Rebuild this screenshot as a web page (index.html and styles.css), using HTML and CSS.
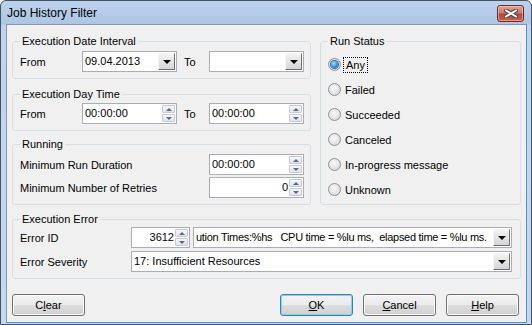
FILE: index.html
```html
<!DOCTYPE html>
<html lang="en">
<head>
    <meta charset="UTF-8">
    <title>Job History Filter</title>
    <link rel="stylesheet" href="styles.css">
</head>
<body>
    <div class="window">
        <div class="titlebar">
            <span class="title">Job History Filter</span>
            <span class="close">
                <svg width="14" height="9" viewBox="0 0 14 9">
                    <path d="M2 1.5 L12 7.5 M12 1.5 L2 7.5" stroke="#4a4a4a" stroke-width="4" stroke-linecap="square"/>
                    <path d="M2 1.5 L12 7.5 M12 1.5 L2 7.5" stroke="#fff" stroke-width="2" stroke-linecap="square"/>
                </svg>
            </span>
        </div>

        <div class="client">
            <div class="top">
                <div class="left">
                    <fieldset class="group g-date">
                        <legend>Execution Date Interval</legend>
                        <div class="row">
                            <span class="lbl">From</span>
                            <div class="combo w95"><span class="value">09.04.2013</span><span class="drop"></span></div>
                            <span class="lbl-to">To</span>
                            <div class="combo w95"><span class="value"></span><span class="drop"></span></div>
                        </div>
                    </fieldset>

                    <fieldset class="group g-time">
                        <legend>Execution Day Time</legend>
                        <div class="row">
                            <span class="lbl">From</span>
                            <div class="spin w95"><span class="value">00:00:00</span><span class="arrows"><i class="up"></i><i class="down"></i></span></div>
                            <span class="lbl-to">To</span>
                            <div class="spin w95"><span class="value">00:00:00</span><span class="arrows"><i class="up"></i><i class="down"></i></span></div>
                        </div>
                    </fieldset>

                    <fieldset class="group g-running">
                        <legend>Running</legend>
                        <div class="row">
                            <span class="lbl-wide">Minimum Run Duration</span>
                            <div class="spin w95"><span class="value">00:00:00</span><span class="arrows"><i class="up"></i><i class="down"></i></span></div>
                        </div>
                        <div class="row">
                            <span class="lbl-wide">Minimum Number of Retries</span>
                            <div class="spin w95"><span class="value num">0</span><span class="arrows"><i class="up"></i><i class="down"></i></span></div>
                        </div>
                    </fieldset>
                </div>

                <fieldset class="group g-status">
                    <legend>Run Status</legend>
                    <div class="radio"><span class="circle on"><span class="dot"></span></span><span class="focus">Any</span></div>
                    <div class="radio"><span class="circle"></span><span>Failed</span></div>
                    <div class="radio"><span class="circle"></span><span>Succeeded</span></div>
                    <div class="radio"><span class="circle"></span><span>Canceled</span></div>
                    <div class="radio"><span class="circle"></span><span>In-progress message</span></div>
                    <div class="radio"><span class="circle"></span><span>Unknown</span></div>
                </fieldset>
            </div>

            <fieldset class="group g-error">
                <legend>Execution Error</legend>
                <div class="row">
                    <span class="lbl-err">Error ID</span>
                    <div class="spin w59"><span class="value num">3612</span><span class="arrows"><i class="up"></i><i class="down"></i></span></div>
                    <div class="combo grow msg"><span class="value">ution Times:%hs   CPU time = %lu ms,  elapsed time = %lu ms.</span><span class="drop"></span></div>
                </div>
                <div class="row">
                    <span class="lbl-err">Error Severity</span>
                    <div class="combo grow"><span class="value">17: Insufficient Resources</span><span class="drop"></span></div>
                </div>
            </fieldset>

            <div class="buttons">
                <button class="btn">C<u>l</u>ear</button>
                <span class="spacer"></span>
                <button class="btn default"><u>O</u>K</button>
                <button class="btn"><u>C</u>ancel</button>
                <button class="btn"><u>H</u>elp</button>
            </div>
        </div>
    </div>
</body>
</html>
```

FILE: styles.css
```css
* { box-sizing: border-box; }
body { margin: 0; font-family: "Liberation Sans", Arial, sans-serif; font-size: 11px; color: #000; background: #fff; }

.window { width: 532px; height: 325px; display: flex; flex-direction: column; border: 1px solid #43536a; border-radius: 6px 6px 0 0; background: linear-gradient(#bdd2eb, #adc5e4 23px, #c0d4ec 24px, #c5d8ee); }
.titlebar { height: 23px; flex: none; display: flex; align-items: center; justify-content: space-between; padding: 0 7px 0 6px; }
.title { font-size: 12px; }
.close { width: 27px; height: 17px; margin-top: 2px; display: flex; align-items: center; justify-content: center; border: 1px solid #6b2b25; border-radius: 3px; background: linear-gradient(#e3a293, #d0786a 45%, #bb4434 55%, #c8614c); box-shadow: inset 0 0 0 1px rgba(255, 220, 210, 0.5); }

.client { flex: 1; margin: 0 4px 1px 5px; background: #f0f0f0; border: 1px solid; border-color: #8396b0 #3a9be0 #3a9be0 #8396b0; padding: 9px 5px 0 5px; display: flex; flex-direction: column; }

.top { display: flex; gap: 9px; align-items: stretch; }
.left { width: 299px; display: flex; flex-direction: column; }

.group { margin: 0; padding: 3px 6px 6px 7px; border: 1px solid #d5dfe5; border-radius: 3px; min-width: 0; }
.group legend { padding: 0 2px; line-height: 14px; font-size: 11px; }
.g-time { margin-top: 8px; padding-top: 2px; }
.g-running { margin-top: 6px; }
.g-running .row + .row { margin-top: 2px; }
.g-status { width: 201px; padding-top: 4px; padding-bottom: 2px; }
.g-error { margin-top: 7px; padding: 1px 8px 6px 7px; }
.g-error .row + .row { margin-top: 3px; }

.row { display: flex; align-items: center; }
.lbl { width: 62px; flex: none; }
.lbl-to { width: 25px; margin-left: 7px; flex: none; }
.lbl-wide { flex: 1; }
.lbl-err { width: 111px; flex: none; }

.combo, .spin { height: 21px; display: flex; align-items: stretch; padding: 1px; background: #fff; border: 1px solid #abadb3; }
.w95 { width: 95px; flex: none; }
.w59 { width: 59px; flex: none; }
.grow { flex: 1; min-width: 0; }
.msg { margin-left: 3px; }
.msg .value { letter-spacing: -0.3px; }
.value { flex: 1; min-width: 0; padding-left: 1px; line-height: 17px; white-space: pre; overflow: hidden; }
.value.num { text-align: right; padding-right: 1px; }

.drop { width: 17px; flex: none; display: flex; align-items: center; justify-content: center; border: 1px solid; border-color: #f6f6f6 #6e6e6e #6e6e6e #f6f6f6; background: linear-gradient(#f4f4f4, #d5d5d5); }
.drop::after { content: ""; border-left: 4px solid transparent; border-right: 4px solid transparent; border-top: 4px solid #000; }

.arrows { width: 13px; flex: none; display: flex; flex-direction: column; gap: 1px; }
.arrows i { flex: 1; display: flex; align-items: center; justify-content: center; border: 1px solid #c3cad5; border-radius: 1px; background: linear-gradient(#f7f7f7, #e2e4e8); }
.arrows .up::after { content: ""; border-left: 3px solid transparent; border-right: 3px solid transparent; border-bottom: 3px solid #4d6a9a; }
.arrows .down::after { content: ""; border-left: 3px solid transparent; border-right: 3px solid transparent; border-top: 3px solid #4d6a9a; }

.radio { height: 25px; display: flex; align-items: center; gap: 4px; }
.circle { width: 13px; height: 13px; flex: none; border-radius: 50%; border: 1px solid #8d9195; background: radial-gradient(circle at 45% 40%, #fafafa, #e2e2e2 60%, #cfcfcf); display: flex; align-items: center; justify-content: center; }
.dot { width: 7px; height: 7px; border-radius: 50%; background: radial-gradient(circle at 40% 35%, #a4e1ff, #3c8fd4 55%, #1a5a9c); box-shadow: 0 0 0 1px #2a6aa8; }
.focus { outline: 1px dotted #000; outline-offset: 1px; padding: 0 1px; }

.buttons { display: flex; gap: 10px; margin-top: 15px; padding-right: 2px; }
.spacer { flex: 1; }
.btn { width: 73px; height: 22px; padding: 0; font: inherit; color: #000; border: 1px solid #707070; border-radius: 3px; background: linear-gradient(#f2f2f2, #ebebeb 50%, #dddddd 51%, #cfcfcf); box-shadow: inset 0 0 0 1px #fbfbfb; }
.btn.default { border-color: #3c7fb1; box-shadow: inset 0 0 0 1px #7fd4f8; }
```
